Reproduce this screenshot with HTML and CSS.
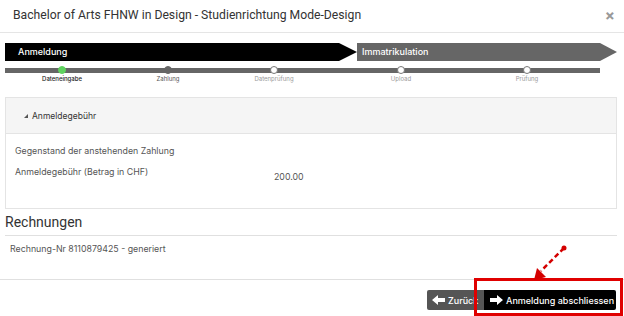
FILE: index.html
```html
<!DOCTYPE html>
<html>
	<head>
		<meta charset="utf-8" />
		<title>Anmeldung</title>
		<link rel="stylesheet" href="styles.css">
	</head>
	<body>
		<div class="modal">
			<div class="modal-header">
				<h4 class="modal-title">Bachelor of Arts FHNW in Design - Studienrichtung Mode-Design</h4>
				<span class="close">&times;</span>
			</div>

			<div class="modal-body">
				<div class="phases">
					<div class="phase phase-active">Anmeldung</div>
					<div class="phase phase-next">Immatrikulation</div>
				</div>

				<div class="track"></div>
				<div class="steps">
					<div class="step done"><span class="dot"></span><span class="label">Dateneingabe</span></div>
					<div class="step current"><span class="dot"></span><span class="label">Zahlung</span></div>
					<div class="step"><span class="dot"></span><span class="label">Datenprüfung</span></div>
					<div class="step wide"><span class="dot"></span><span class="label">Upload</span></div>
					<div class="step wide"><span class="dot"></span><span class="label">Prüfung</span></div>
				</div>

				<div class="panel">
					<div class="panel-heading"><span class="caret"></span>Anmeldegebühr</div>
					<div class="panel-body">
						<div class="row">Gegenstand der anstehenden Zahlung</div>
						<div class="row row-fee">
							<span class="fee-label">Anmeldegebühr (Betrag in CHF)</span>
							<span class="fee-value">200.00</span>
						</div>
					</div>
				</div>

				<h3 class="section-title">Rechnungen</h3>
				<p class="invoice">Rechnung-Nr 8110879425 - generiert</p>
			</div>

			<div class="modal-footer">
				<a href="#" class="btn btn-back">
					<svg width="13" height="10" viewBox="0 0 13 10"><polygon points="0,5 6,0 6,3 13,3 13,7 6,7 6,10" fill="#fff"/></svg>
					Zurück
				</a>
				<a href="#" class="btn btn-finish">
					<svg width="13" height="10" viewBox="0 0 13 10"><polygon points="13,5 7,0 7,3 0,3 0,7 7,7 7,10" fill="#fff"/></svg>
					Anmeldung abschliessen
				</a>
				<div class="highlight"></div>
				<svg class="pointer" width="44" height="40" viewBox="0 0 44 40">
					<line x1="38" y1="4" x2="15" y2="27" stroke="#d40000" stroke-width="2.5" stroke-dasharray="5,3"/>
					<circle cx="38" cy="4" r="2.5" fill="#d40000"/>
					<polygon points="8,36 11,24 20,33" fill="#d40000"/>
				</svg>
			</div>
		</div>
	</body>
</html>
```

FILE: styles.css
```css
*{
	margin: 0;
	padding: 0;
	box-sizing: border-box;
}
body{
	font-family: Inter, "Liberation Sans", sans-serif;
	color: #333;
	background: #fff;
	width: 624px;
	height: 316px;
	overflow: hidden;
}
.modal-header{
	height: 33px;
	border-bottom: 1px solid #e5e5e5;
	display: flex;
	align-items: center;
	justify-content: space-between;
	padding: 0 9px 2px 13px;
}
.modal-title{
	font-family: Roboto, "Liberation Sans", sans-serif;
	font-weight: normal;
	font-size: 12.2px;
	color: #333;
}
.close{
	font-size: 15px;
	color: #999;
	font-weight: bold;
}
.modal-body{
	padding: 10px 7px 0 5px;
}

/* phase bar */
.phases{
	display: flex;
	height: 18px;
}
.phase{
	color: #fff;
	font-size: 9px;
	font-weight: 500;
	line-height: 18px;
	padding-left: 13px;
}
.phase-active{
	width: 352px;
	background: #000;
	clip-path: polygon(0 0, calc(100% - 18px) 0, 100% 50%, calc(100% - 18px) 100%, 0 100%);
}
.phase-next{
	width: 260px;
	padding-left: 5px;
	background: #666;
	clip-path: polygon(0 0, calc(100% - 17px) 0, 100% 50%, calc(100% - 17px) 100%, 0 100%);
}

/* steps */
.track{
	width: 595px;
	height: 5px;
	background: #666;
	margin-top: 7px;
}
.steps{
	display: flex;
	margin-top: -7px;
	padding-left: 27px;
	gap: 46px;
}
.step{
	width: 60px;
	display: flex;
	flex-direction: column;
	align-items: center;
}
.step.wide{
	margin-left: 21px;
}
.step.wide + .step.wide{
	margin-left: 20px;
}
.dot{
	width: 8px;
	height: 8px;
	border-radius: 50%;
	background: #fff;
	border: 1px solid #777;
}
.step.done .dot{
	background: #5fd35f;
	border-color: #5fd35f;
}
.step.current .dot{
	background: #666;
	border-color: #666;
}
.label{
	font-size: 6px;
	color: #999;
	margin-top: 1px;
}
.step.done .label{
	color: #222;
	font-weight: 500;
}
.step.current .label{
	color: #555;
}

/* panel */
.panel{
	margin-top: 15px;
	border: 1px solid #e4e4e4;
	height: 112px;
}
.panel-heading{
	height: 36px;
	background: #f5f5f5;
	border-bottom: 1px solid #e4e4e4;
	font-size: 8.5px;
	display: flex;
	align-items: center;
	padding-left: 18px;
	color: #333;
}
.caret{
	width: 0;
	height: 0;
	border-left: 4px solid transparent;
	border-bottom: 4px solid #555;
	margin-right: 4px;
}
.panel-body{
	padding: 11px 9px;
	font-size: 8.8px;
	color: #555;
}
.row-fee{
	display: flex;
	margin-top: 10px;
}
.fee-label{
	width: 259px;
}
.fee-value{
	margin-top: 5px;
}

/* invoices */
.section-title{
	font-family: Roboto, "Liberation Sans", sans-serif;
	font-weight: normal;
	font-size: 14px;
	color: #333;
	margin-top: 5px;
	padding-bottom: 5px;
	border-bottom: 1px solid #e0e0e0;
}
.invoice{
	font-size: 8.8px;
	color: #555;
	padding: 7px 5px 0;
	height: 43px;
}

/* footer */
.modal-footer{
	position: relative;
	border-top: 1px solid #e0e0e0;
	display: flex;
	justify-content: flex-end;
	padding: 10px 8px 0 0;
}
.btn{
	display: flex;
	align-items: center;
	height: 20px;
	color: #fff;
	text-decoration: none;
	font-size: 9px;
	font-weight: 500;
	white-space: nowrap;
	overflow: hidden;
}
.btn svg{
	flex-shrink: 0;
}
.btn-back{
	width: 57px;
	background: #555;
	padding-left: 5px;
	gap: 3px;
	border-radius: 2px 0 0 2px;
}
.btn-finish{
	width: 132px;
	background: #000;
	padding-left: 6px;
	gap: 3px;
	border-radius: 0 2px 2px 0;
}
.highlight{
	position: absolute;
	left: 474px;
	top: -2px;
	width: 149px;
	height: 38px;
	border: 3px solid #e00000;
}
.pointer{
	position: absolute;
	left: 526px;
	top: -36px;
}
```
